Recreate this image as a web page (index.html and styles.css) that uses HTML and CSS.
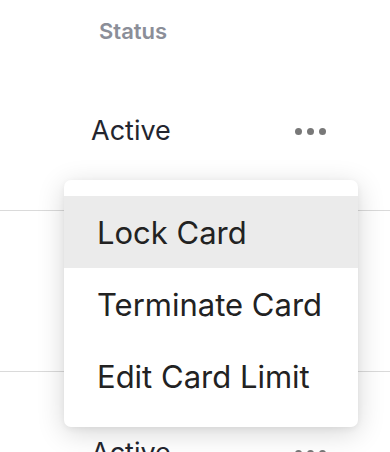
FILE: index.html
```html
<!doctype html>
<html lang="en">
<head>
<meta charset="utf-8">
<title>Cards – Status</title>
<meta name="viewport" content="width=device-width,initial-scale=1">
<link rel="stylesheet" href="styles.css">
</head>
<body>
<div class="table">
  <div class="head">
    <span class="head-label">Status</span>
  </div>

  <div class="row">
    <span class="status">Active</span>
    <button type="button" class="more" aria-label="More actions">
      <i></i><i></i><i></i>
    </button>
  </div>
  <div class="row">
    <span class="status">Active</span>
    <button type="button" class="more" aria-label="More actions">
      <i></i><i></i><i></i>
    </button>
  </div>
  <div class="row">
    <span class="status">Active</span>
    <button type="button" class="more" aria-label="More actions">
      <i></i><i></i><i></i>
    </button>
  </div>

  <ul class="menu" role="menu">
    <li class="menu-item is-hover" role="menuitem">Lock Card</li>
    <li class="menu-item" role="menuitem">Terminate Card</li>
    <li class="menu-item" role="menuitem">Edit Card Limit</li>
  </ul>
</div>
</body>
</html>
```

FILE: styles.css
```css
body {
  margin: 0;
  background: #fff;
  font-family: Inter, "Noto Sans", sans-serif;
  color: #23252e;
  overflow: hidden;
}
.table {
  position: relative;
}
.head {
  height: 50px;
  padding: 18px 0 0 99px;
  box-sizing: border-box;
}
.head-label {
  display: block;
  font-size: 22px;
  line-height: 26px;
  font-weight: 600;
  color: #8b8e98;
}
.row {
  height: 161px;
  box-sizing: border-box;
  border-bottom: 1px solid #dadada;
  display: flex;
  align-items: center;
  padding: 0 64px 0 91px;
  justify-content: space-between;
}
.status {
  font-size: 27px;
  font-weight: 400;
  color: #23252e;
}
.more {
  border: 0;
  background: none;
  padding: 0;
  display: flex;
  gap: 5px;
  margin-top: 2px;
}
.more i {
  display: block;
  width: 7px;
  height: 7px;
  border-radius: 50%;
  background: #787878;
}
.menu {
  position: absolute;
  left: 64px;
  top: 180px;
  width: 294px;
  margin: 0;
  padding: 16px 0 15px;
  list-style: none;
  background: #fff;
  border-radius: 7px;
  box-shadow: 0 6px 28px rgba(0, 0, 0, 0.16), 0 2px 6px rgba(0, 0, 0, 0.06);
}
.menu-item {
  height: 72px;
  display: flex;
  align-items: center;
  padding-left: 33px;
  font-size: 31px;
  color: #222;
}
.menu-item.is-hover {
  background: #ebebeb;
}
```
